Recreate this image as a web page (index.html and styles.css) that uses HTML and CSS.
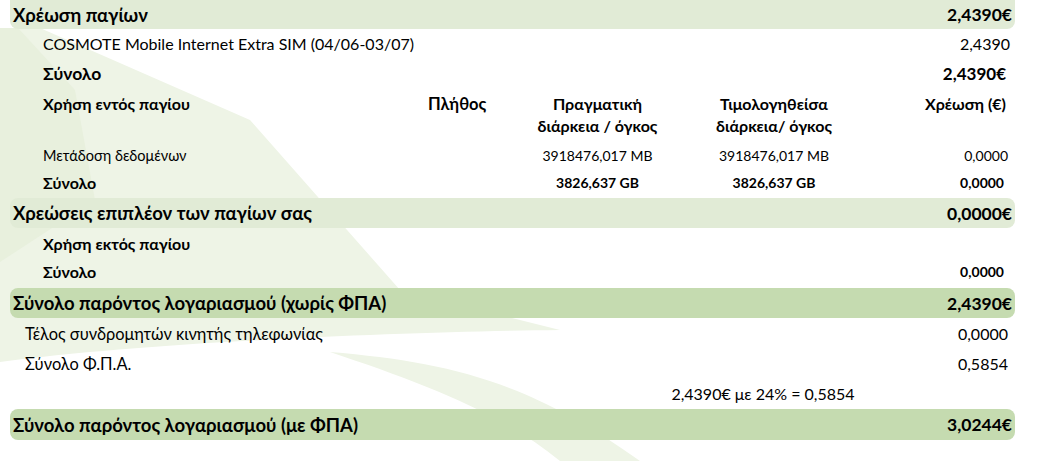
FILE: index.html
```html
<!DOCTYPE html>
<html lang="el">
<head>
<meta charset="utf-8">
<title>Λογαριασμός</title>
<link rel="stylesheet" href="styles.css">
</head>
<body>
<svg class="backdrop" width="1044" height="461" viewBox="0 0 1044 461" aria-hidden="true">
  <path class="leaf-light" d="M0,28 L40,28 L250,120 L400,290 L560,330 C 400,332 150,342 0,362 Z"/>
  <path class="leaf-light" d="M330,352 C 450,362 530,382 640,461 L560,461 C 500,412 420,382 330,352 Z"/>
  <path class="leaf-dark" d="M0,28 L18,28 L75,90 L95,200 L0,262 Z"/>
</svg>
<main class="sheet">
  <div class="band band-light">
    <span class="b-label">Χρέωση παγίων</span><span class="b-value">2,4390€</span>
  </div>
  <div class="row row-item">
    <span>COSMOTE Mobile Internet Extra SIM (04/06-03/07)</span><span>2,4390</span>
  </div>
  <div class="row row-total">
    <span class="t-label">Σύνολο</span><span>2,4390€</span>
  </div>

  <div class="usage usage-head">
    <span class="c-label">Χρήση εντός παγίου</span>
    <span class="c-count">Πλήθος</span>
    <span class="c-actual">Πραγματική<br>διάρκεια / όγκος</span>
    <span class="c-billed">Τιμολογηθείσα<br>διάρκεια/ όγκος</span>
    <span class="c-charge">Χρέωση (€)</span>
  </div>
  <div class="usage usage-data">
    <span class="c-label">Μετάδοση δεδομένων</span>
    <span class="c-count"></span>
    <span class="c-actual">3918476,017 MB</span>
    <span class="c-billed">3918476,017 MB</span>
    <span class="c-charge">0,0000</span>
  </div>
  <div class="usage usage-sum">
    <span class="c-label">Σύνολο</span>
    <span class="c-count"></span>
    <span class="c-actual">3826,637 GB</span>
    <span class="c-billed">3826,637 GB</span>
    <span class="c-charge">0,0000</span>
  </div>

  <div class="band band-light band-mid">
    <span class="b-label">Χρεώσεις επιπλέον των παγίων σας</span><span class="b-value">0,0000€</span>
  </div>
  <div class="usage usage-head2">
    <span class="c-label">Χρήση εκτός παγίου</span>
  </div>
  <div class="usage usage-sum usage-sum2">
    <span class="c-label">Σύνολο</span>
    <span class="c-count"></span>
    <span class="c-actual"></span>
    <span class="c-billed"></span>
    <span class="c-charge">0,0000</span>
  </div>

  <div class="band band-dark band-mid2">
    <span class="b-label">Σύνολο παρόντος λογαριασμού (χωρίς ΦΠΑ)</span><span class="b-value">2,4390€</span>
  </div>
  <div class="row row-fee">
    <span class="f-label">Τέλος συνδρομητών κινητής τηλεφωνίας</span><span>0,0000</span>
  </div>
  <div class="row row-fee">
    <span class="f-label">Σύνολο Φ.Π.Α.</span><span>0,5854</span>
  </div>
  <div class="usage usage-formula">
    <span class="c-formula">2,4390€ με 24% = 0,5854</span>
  </div>
  <div class="band band-dark">
    <span class="b-label">Σύνολο παρόντος λογαριασμού (με ΦΠΑ)</span><span class="b-value">3,0244€</span>
  </div>
</main>
</body>
</html>
```
FILE: styles.css
```css
html, body {
  margin: 0;
  padding: 0;
  background: #ffffff;
}
body {
  position: relative;
  width: 1044px;
  height: 461px;
  overflow: hidden;
  font-family: Lato, "Noto Sans", "Liberation Sans", sans-serif;
  color: #000000;
}
.backdrop {
  position: absolute;
  top: 0;
  left: 0;
  z-index: 0;
}
.leaf-light { fill: #eef4e6; }
.leaf-dark { fill: #e8f0dd; }

.sheet {
  position: relative;
  z-index: 1;
  width: 1005px;
  margin-left: 10px;
}

.band {
  display: flex;
  justify-content: space-between;
  align-items: center;
  height: 30px;
  padding: 0 3px 0 3px;
  border-radius: 8px;
  font-weight: 700;
}
.band .b-label { font-size: 18.5px; }
.band .b-value { font-size: 17.5px; }
.band:first-child {
  height: 29px;
  border-radius: 0 0 8px 8px;
}
.band-light { background: #e1ebd6; }
.band-dark { background: #c5dbb0; height: 31px; }
.band-mid { margin-top: 3px; }
.band-mid2 { margin-top: 4px; height: 30px; }

.row {
  display: flex;
  justify-content: space-between;
  align-items: center;
}
.row-item {
  height: 29px;
  padding: 0 5px 0 33px;
  font-size: 16px;
}
.row-total {
  height: 30px;
  padding: 0 9px 0 33px;
  font-size: 17px;
  font-weight: 700;
}
.row-total .t-label { font-size: 17.5px; }
.row-fee {
  height: 30px;
  padding: 0 7px 0 15px;
  font-size: 16px;
}
.row-fee .f-label { font-size: 16.4px; }

.usage {
  display: grid;
  grid-template-columns: 385px 92px 155px 198px 133px;
  align-items: center;
  padding: 0 9px 0 33px;
}
.usage .c-actual,
.usage .c-billed { text-align: center; }
.usage .c-charge { text-align: right; }

.usage-head {
  align-items: start;
  padding-top: 5px;
  padding-bottom: 4px;
  font-size: 16px;
  font-weight: 700;
  line-height: 22px;
}
.usage-head .c-count { font-size: 16.5px; }
.usage-data {
  height: 28px;
  font-size: 14px;
}
.usage-data .c-label { font-size: 14.5px; }
.usage-data .c-charge { margin-right: -2px; }
.usage-sum {
  height: 26px;
  font-size: 14px;
  font-weight: 700;
}
.usage-sum .c-label { font-size: 16px; }
.usage-sum .c-charge { margin-right: 2px; }
.usage-head2 {
  height: 30px;
  font-size: 16px;
  font-weight: 700;
}
.usage-formula {
  height: 31px;
  font-size: 16px;
}
.c-formula {
  grid-column: 3 / 6;
  text-align: center;
}
```
